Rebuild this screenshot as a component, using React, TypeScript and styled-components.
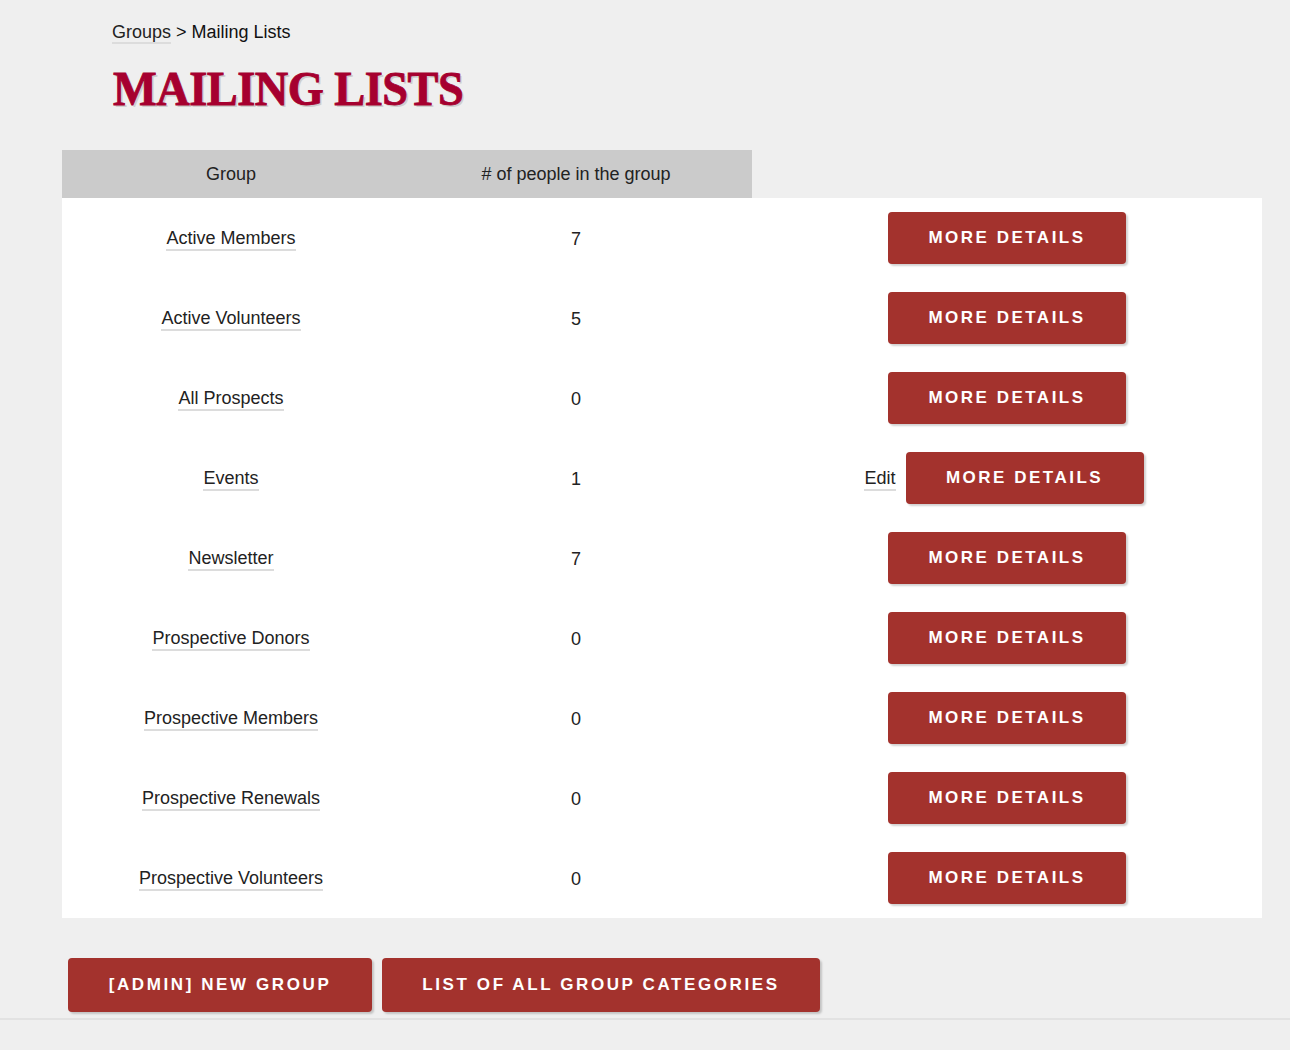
import React from "react";
import styled, { createGlobalStyle } from "styled-components";

const GlobalStyle = createGlobalStyle`
  body {
    margin: 0;
    background: #efefef;
    font-family: "Liberation Sans", Arial, sans-serif;
    color: #222;
  }
`;

const StPage = styled.main`
  padding: 20px 28px 0 62px;
  min-height: 1050px;
  box-sizing: border-box;
`;

const StCrumbs = styled.nav`
  margin-left: 50px;
  font-size: 18px;
  line-height: 24px;
  color: #111;
`;

const StLink = styled.a`
  color: #222;
  text-decoration: none;
  border-bottom: 2px solid #dcdcdc;
  cursor: pointer;
`;

const StTitle = styled.h1`
  margin: 18px 0 34px 51px;
  font-family: "Liberation Serif", serif;
  font-weight: bold;
  font-size: 49px;
  line-height: 54px;
  letter-spacing: -0.5px;
  color: #a6002f;
  -webkit-text-stroke: 0.9px #a6002f;
  text-shadow: 2px 2px 0 #cfcfcf;
  transform: scaleX(0.945);
  transform-origin: left center;
`;

const StTable = styled.div`
  width: 1200px;
  display: grid;
  grid-template-columns: 338px 352px 510px;
`;

const StHead = styled.div<{ $blank?: boolean }>`
  height: 48px;
  display: flex;
  align-items: center;
  justify-content: center;
  font-size: 18px;
  background: ${(p) => (p.$blank ? "transparent" : "#cbcbcb")};
`;

const StCell = styled.div`
  height: 80px;
  box-sizing: border-box;
  padding-top: 2px;
  background: #fff;
  display: flex;
  align-items: center;
  justify-content: center;
  gap: 10px;
  font-size: 18px;
`;

const StButton = styled.button`
  font-family: "Liberation Sans", Arial, sans-serif;
  font-weight: bold;
  font-size: 17px;
  letter-spacing: 2.5px;
  color: #fff;
  background: #a3322d;
  border: none;
  border-radius: 4px;
  box-shadow: 2px 2px 2px rgba(0, 0, 0, 0.18);
  text-transform: uppercase;
  cursor: pointer;
`;

const StDetailsButton = styled(StButton)`
  width: 238px;
  height: 52px;
  margin-top: -2px;
`;

const StEditLink = styled(StLink)`
  margin-left: -6px;
`;

const StFooter = styled.div`
  display: flex;
  gap: 10px;
  padding: 40px 0 6px 6px;
`;

const StFooterButton = styled(StButton)<{ $width: number }>`
  width: ${(p) => p.$width}px;
  height: 54px;
  letter-spacing: 2.6px;
`;

const StRule = styled.hr`
  margin: 0 -28px 0 -62px;
  border: none;
  border-top: 2px solid #e2e2e2;
`;

const groups = [
  { name: "Active Members", count: 7 },
  { name: "Active Volunteers", count: 5 },
  { name: "All Prospects", count: 0 },
  { name: "Events", count: 1, edit: true },
  { name: "Newsletter", count: 7 },
  { name: "Prospective Donors", count: 0 },
  { name: "Prospective Members", count: 0 },
  { name: "Prospective Renewals", count: 0 },
  { name: "Prospective Volunteers", count: 0 },
];

export default function App() {
  return (
    <>
      <GlobalStyle />
      <StPage>
        <StCrumbs>
          <StLink>Groups</StLink> &gt; Mailing Lists
        </StCrumbs>
        <StTitle>MAILING LISTS</StTitle>
        <StTable>
          <StHead>Group</StHead>
          <StHead># of people in the group</StHead>
          <StHead $blank />
          {groups.map((g) => (
            <React.Fragment key={g.name}>
              <StCell>
                <StLink>{g.name}</StLink>
              </StCell>
              <StCell>{g.count}</StCell>
              <StCell>
                {g.edit && <StEditLink>Edit</StEditLink>}
                <StDetailsButton>More Details</StDetailsButton>
              </StCell>
            </React.Fragment>
          ))}
        </StTable>
        <StFooter>
          <StFooterButton $width={304}>[Admin] New Group</StFooterButton>
          <StFooterButton $width={438}>List of all group categories</StFooterButton>
        </StFooter>
        <StRule />
      </StPage>
    </>
  );
}
